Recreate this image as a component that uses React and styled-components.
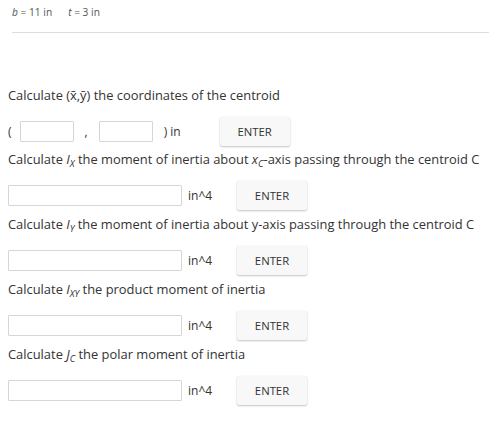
import React from "react";
import styled, { createGlobalStyle } from "styled-components";

const Global = createGlobalStyle`
  html, body { margin: 0; padding: 0; background: #fff; }
  body { font-family: "Open Sans", "Noto Sans", sans-serif; color: #333; }
`;

const Page = styled.div`
  width: 489px;
  height: 428px;
  overflow: hidden;
  background: #fff;
`;

const Given = styled.div`
  padding: 5px 0 0 12px;
  font-size: 10.2px;
  line-height: 14px;
  color: #555;
  display: flex;
  gap: 16px;
`;

const Divider = styled.hr`
  margin: 13px 0 0 12px;
  border: 0;
  border-top: 1px solid #ddd;
  height: 0;
`;

const Questions = styled.div`
  margin-top: 52px;
  padding-left: 8px;
`;

const Question = styled.div`
  display: flex;
  flex-direction: column;
  margin-bottom: ${(p) => (p.$first ? "3px" : "4px")};
`;

const Caption = styled.div`
  font-size: 12.9px;
  line-height: 20px;
  height: 20px;
  color: #333;
  white-space: nowrap;
`;

const Row = styled.div`
  display: flex;
  align-items: center;
  height: 29px;
  margin-top: 12px;
  font-size: 12px;
  color: #333;
`;

const Field = styled.input`
  box-sizing: border-box;
  width: ${(p) => p.$w}px;
  height: 21px;
  border: 1px solid #d6d6d6;
  border-radius: 1px;
  background: #fff;
  margin: 0;
  padding: 0 4px;
  font: inherit;
`;

const Sym = styled.span`
  display: inline-block;
  margin: ${(p) => p.$m};
`;

const Unit = styled.span`
  margin-left: 6px;
  width: 49px;
`;

const Enter = styled.button`
  box-sizing: border-box;
  width: 70px;
  height: 29px;
  border: 0;
  border-radius: 2px;
  background: #f8f8f8;
  box-shadow: 0 1px 2px rgba(0, 0, 0, 0.22), 0 0 1px rgba(0, 0, 0, 0.12);
  font-family: "Open Sans", "Noto Sans", sans-serif;
  font-size: 11.3px;
  color: #333;
  margin-left: ${(p) => p.$ml || 0}px;
  padding: 0;
`;

const V = styled.i`
  font-style: italic;
`;

const Sub = styled.sub`
  font-style: italic;
  font-size: 0.72em;
  vertical-align: -0.35em;
  line-height: 0;
`;

const Sym2 = ({ v, s }) => (
  <>
    <V>{v}</V>
    <Sub>{s}</Sub>
  </>
);

const UnitRow = () => (
  <Row>
    <Field $w={174} />
    <Unit>in^4</Unit>
    <Enter>ENTER</Enter>
  </Row>
);

export default function App() {
  return (
    <Page>
      <Global />
      <Given>
        <span>
          <V>b</V> = 11 in
        </span>
        <span>
          <V>t</V> = 3 in
        </span>
      </Given>
      <Divider />
      <Questions>
        <Question $first>
          <Caption>Calculate (x̄,ȳ) the coordinates of the centroid</Caption>
          <Row>
            <span>(</span>
            <Sym $m="0 0 0 8px" />
            <Field $w={54} />
            <Sym $m="0 11px 0 11px">,</Sym>
            <Field $w={54} />
            <Sym $m="0 0 0 11px">) in</Sym>
            <Enter $ml={39}>ENTER</Enter>
          </Row>
        </Question>
        <Question>
          <Caption>
            Calculate <Sym2 v="I" s="X" /> the moment of inertia about{" "}
            <Sym2 v="x" s="C" />
            -axis passing through the centroid C
          </Caption>
          <UnitRow />
        </Question>
        <Question>
          <Caption>
            Calculate <Sym2 v="I" s="Y" /> the moment of inertia about y-axis
            passing through the centroid C
          </Caption>
          <UnitRow />
        </Question>
        <Question>
          <Caption>
            Calculate <Sym2 v="I" s="XY" /> the product moment of inertia
          </Caption>
          <UnitRow />
        </Question>
        <Question>
          <Caption>
            Calculate <Sym2 v="J" s="C" /> the polar moment of inertia
          </Caption>
          <UnitRow />
        </Question>
      </Questions>
    </Page>
  );
}
